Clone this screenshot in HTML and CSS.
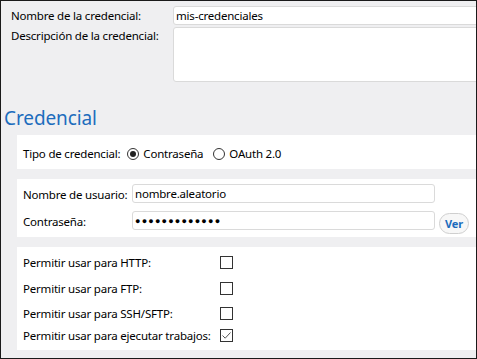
FILE: index.html
```html
<!DOCTYPE html>
<html lang="es">
<head>
<meta charset="utf-8">
<link rel="stylesheet" href="styles.css">
</head>
<body>
<div class="frame">
  <div class="top">
    <div class="lbl lbl-name">Nombre de la credencial:</div>
    <div class="field input1">mis-credenciales</div>
    <div class="lbl lbl-desc">Descripción de la credencial:</div>
    <div class="field area"></div>
  </div>
  <h2 class="heading">Credencial</h2>
  <div class="panel p1">
    <span class="plabel">Tipo de credencial:</span>
    <span class="radio on"></span><span class="rtext">Contraseña</span>
    <span class="radio"></span><span class="rtext">OAuth 2.0</span>
  </div>
  <div class="panel p2">
    <div class="row r-user">
      <span class="ulabel">Nombre de usuario:</span>
      <span class="field txt">nombre.aleatorio</span>
    </div>
    <div class="row r-pass">
      <span class="ulabel">Contraseña:</span>
      <span class="field txt dots">●●●●●●●●●●●●●</span>
      <span class="btn">Ver</span>
    </div>
  </div>
  <div class="panel p3">
    <div class="crow c1"><span class="clabel">Permitir usar para HTTP:</span><span class="cb"></span></div>
    <div class="crow c2"><span class="clabel">Permitir usar para FTP:</span><span class="cb"></span></div>
    <div class="crow c3"><span class="clabel">Permitir usar para SSH/SFTP:</span><span class="cb"></span></div>
    <div class="crow c4"><span class="clabel">Permitir usar para ejecutar trabajos:</span><span class="cb checked"><svg width="11" height="11" viewBox="0 0 11 11"><path d="M1.5 5.5 L4.2 8.2 L9.5 2.5" fill="none" stroke="#555" stroke-width="1"/></svg></span></div>
  </div>
</div>
</body>
</html>
```
FILE: styles.css
```css
* { box-sizing: border-box; }
html, body { margin: 0; padding: 0; }
body {
  font-family: "Noto Sans", "Open Sans", sans-serif;
  font-size: 11.5px;
  letter-spacing: -0.2px;
  color: #000;
}
.frame {
  width: 477px;
  height: 359px;
  border: 1px solid #1a1a1a;
  background: #efeff1;
  overflow: hidden;
}
.top {
  display: grid;
  grid-template-columns: 162px 320px;
  grid-template-rows: 19px 55px;
  row-gap: 2px;
  padding: 5px 0 0 10px;
}
.lbl { line-height: 20px; white-space: nowrap; }
.lbl-desc { line-height: 16px; padding-top: 1px; }
.field {
  background: #fff;
  border: 1px solid #dadada;
  border-radius: 3px;
}
.input1 { line-height: 18px; padding-left: 2px; }
.heading {
  margin: 0;
  padding: 24px 0 0 3px;
  height: 53px;
  font-weight: normal;
  font-size: 19px;
  letter-spacing: -0.1px;
  line-height: 25px;
  color: #1c6cbd;
}
.panel {
  background: #fff;
  margin-left: 16px;
}
.p1 {
  height: 34px;
  display: flex;
  align-items: center;
  padding: 3px 0 0 6px;
  white-space: nowrap;
}
.plabel { margin-right: 7px; }
.radio {
  width: 12px;
  height: 12px;
  border: 1px solid #333;
  border-radius: 50%;
  display: inline-flex;
  align-items: center;
  justify-content: center;
  margin-right: 4px;
}
.radio.on::after {
  content: "";
  width: 6px;
  height: 6px;
  border-radius: 50%;
  background: #222;
}
.rtext { margin-right: 10px; }
.p2 {
  margin-top: 10px;
  height: 58px;
  padding: 5px 0 0 6px;
}
.row { display: flex; align-items: flex-start; }
.r-pass { margin-top: 6px; }
.ulabel { width: 109px; line-height: 21px; white-space: nowrap; }
.txt {
  width: 303px;
  height: 19px;
  line-height: 18px;
  padding-left: 2px;
}
.dots { font-size: 9px; letter-spacing: 1.2px; line-height: 17px; }
.btn {
  margin: 2px 0 0 4px;
  width: 30px;
  height: 21px;
  border: 1px solid #cfcfcf;
  border-radius: 11px;
  background: #f7f7f7;
  color: #1c6cbd;
  font-weight: bold;
  font-size: 11px;
  line-height: 19px;
  text-align: center;
}
.p3 {
  margin-top: 10px;
  height: 103px;
  padding: 2px 0 0 6px;
  display: grid;
  grid-template-rows: 26px 26px 25px 19px;
}
.crow { display: flex; align-items: center; }
.clabel { width: 197px; white-space: nowrap; }
.cb {
  width: 13px;
  height: 13px;
  border: 1px solid #333;
  background: #fff;
  display: inline-flex;
  align-items: center;
  justify-content: center;
}
```
